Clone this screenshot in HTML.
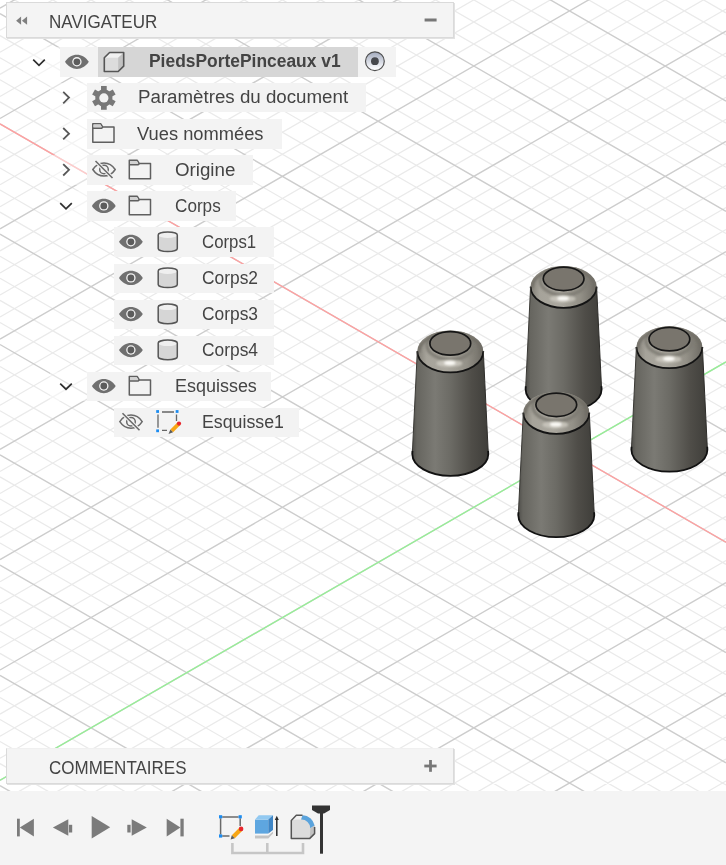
<!DOCTYPE html>
<html><head><meta charset="utf-8">
<style>
html,body{margin:0;padding:0;}
body{width:726px;height:865px;position:relative;overflow:hidden;background:#fff;font-family:"Liberation Sans",sans-serif;}
#vp{position:absolute;left:0;top:0;}
.t{position:absolute;white-space:nowrap;color:#444;line-height:1;transform-origin:0 0;}
.box{position:absolute;background:#f3f3f3;}
.ic{position:absolute;overflow:visible;}
.panel{position:absolute;background:#f4f4f4;box-sizing:border-box;border:1px solid #dadada;box-shadow:1px 1px 0 #e2e2e2;}
#tl{position:absolute;left:0;top:791px;width:726px;height:74px;background:#f4f4f4;}
</style></head><body>
<svg id="vp" width="726" height="865" viewBox="0 0 726 865">
<defs>
<linearGradient id="body" x1="0" x2="1" y1="0" y2="0">
<stop offset="0" stop-color="#4f4e4a"/>
<stop offset="0.06" stop-color="#66655f"/>
<stop offset="0.3" stop-color="#7b7a74"/>
<stop offset="0.5" stop-color="#6c6b65"/>
<stop offset="0.78" stop-color="#4f4d48"/>
<stop offset="1" stop-color="#3f3e3a"/>
</linearGradient>
<linearGradient id="dome" x1="0" x2="1" y1="0" y2="0">
<stop offset="0" stop-color="#817e76"/>
<stop offset="0.14" stop-color="#a6a39a"/>
<stop offset="0.45" stop-color="#aba89f"/>
<stop offset="0.75" stop-color="#949188"/>
<stop offset="1" stop-color="#6d6a63"/>
</linearGradient>
<filter id="blur" x="-50%" y="-50%" width="200%" height="200%"><feGaussianBlur stdDeviation="1.6"/></filter>
<filter id="gb" x="0" y="0" width="726" height="865" filterUnits="userSpaceOnUse"><feGaussianBlur stdDeviation="0.45"/></filter>
<filter id="blur2" x="-50%" y="-100%" width="200%" height="300%"><feGaussianBlur stdDeviation="1.1"/></filter>
<filter id="blur1" x="-20%" y="-50%" width="140%" height="200%"><feGaussianBlur stdDeviation="1"/></filter>
</defs>
<g filter="url(#gb)">
<path d="M0 -405.54 L726 12.84 M0 -383.48 L726 34.9 M0 -361.42 L726 56.96 M0 -339.36 L726 79.02 M0 -295.24 L726 123.14 M0 -273.18 L726 145.2 M0 -251.12 L726 167.26 M0 -229.06 L726 189.32 M0 -184.94 L726 233.44 M0 -162.88 L726 255.5 M0 -140.82 L726 277.56 M0 -118.76 L726 299.62 M0 -74.64 L726 343.74 M0 -52.58 L726 365.8 M0 -30.52 L726 387.86 M0 -8.46 L726 409.92 M0 35.66 L726 454.04 M0 57.72 L726 476.1 M0 79.78 L726 498.16 M0 101.84 L726 520.22 M0 145.96 L726 564.34 M0 168.02 L726 586.4 M0 190.08 L726 608.46 M0 212.14 L726 630.52 M0 256.26 L726 674.64 M0 278.32 L726 696.7 M0 300.38 L726 718.76 M0 322.44 L726 740.82 M0 366.56 L726 784.94 M0 388.62 L726 807 M0 410.68 L726 829.06 M0 432.74 L726 851.12 M0 476.86 L726 895.24 M0 498.92 L726 917.3 M0 520.98 L726 939.36 M0 543.04 L726 961.42 M0 587.16 L726 1005.54 M0 609.22 L726 1027.6 M0 631.28 L726 1049.66 M0 653.34 L726 1071.72 M0 697.46 L726 1115.84 M0 719.52 L726 1137.9 M0 741.58 L726 1159.96 M0 763.64 L726 1182.02 M0 807.76 L726 1226.14 M0 829.82 L726 1248.2 M0 851.88 L726 1270.26 M0 30.26 L726 -388.12 M0 52.32 L726 -366.06 M0 74.38 L726 -344 M0 96.44 L726 -321.94 M0 140.56 L726 -277.82 M0 162.62 L726 -255.76 M0 184.68 L726 -233.7 M0 206.74 L726 -211.64 M0 250.86 L726 -167.52 M0 272.92 L726 -145.46 M0 294.98 L726 -123.4 M0 317.04 L726 -101.34 M0 361.16 L726 -57.22 M0 383.22 L726 -35.16 M0 405.28 L726 -13.1 M0 427.34 L726 8.96 M0 471.46 L726 53.08 M0 493.52 L726 75.14 M0 515.58 L726 97.2 M0 537.64 L726 119.26 M0 581.76 L726 163.38 M0 603.82 L726 185.44 M0 625.88 L726 207.5 M0 647.94 L726 229.56 M0 692.06 L726 273.68 M0 714.12 L726 295.74 M0 736.18 L726 317.8 M0 758.24 L726 339.86 M0 802.36 L726 383.98 M0 824.42 L726 406.04 M0 846.48 L726 428.1 M0 868.54 L726 450.16 M0 912.66 L726 494.28 M0 934.72 L726 516.34 M0 956.78 L726 538.4 M0 978.84 L726 560.46 M0 1022.96 L726 604.58 M0 1045.02 L726 626.64 M0 1067.08 L726 648.7 M0 1089.14 L726 670.76 M0 1133.26 L726 714.88 M0 1155.32 L726 736.94 M0 1177.38 L726 759 M0 1199.44 L726 781.06 M0 1243.56 L726 825.18 M0 1265.62 L726 847.24" stroke="#eaeaea" stroke-width="1.25" fill="none"/>
<path d="M0 -317.3 L726 101.08 M0 -207 L726 211.38 M0 -96.7 L726 321.68 M0 13.6 L726 431.98 M0 123.9 L726 542.28 M0 234.2 L726 652.58 M0 344.5 L726 762.88 M0 454.8 L726 873.18 M0 565.1 L726 983.48 M0 675.4 L726 1093.78 M0 785.7 L726 1204.08 M0 8.2 L726 -410.18 M0 118.5 L726 -299.88 M0 228.8 L726 -189.58 M0 339.1 L726 -79.28 M0 449.4 L726 31.02 M0 559.7 L726 141.32 M0 670 L726 251.62 M0 780.3 L726 361.92 M0 890.6 L726 472.22 M0 1000.9 L726 582.52 M0 1111.2 L726 692.82 M0 1221.5 L726 803.12" stroke="#cdcdcd" stroke-width="1.4" fill="none"/>
</g>
<path d="M0 123.9 L726 542.28" stroke="#ffa0a0" stroke-width="1.3" fill="none"/>
<path d="M0 780.3 L726 361.92" stroke="#96ef96" stroke-width="1.3" fill="none"/>
<path d="M530.6 286.7 L525.6 389.3 A38 21.9 0 0 0 601.6 389.3 L596.6 286.7 Z" fill="url(#body)"/>
<clipPath id="dc0"><path d="M530.6 286.7 A33 20.8 0 0 1 596.6 286.7 A33 21.1 0 0 1 530.6 286.7 Z"/></clipPath>
<path d="M530.6 286.7 A33 20.8 0 0 1 596.6 286.7 A33 21.1 0 0 1 530.6 286.7 Z" fill="url(#dome)"/>
<g clip-path="url(#dc0)">
<ellipse cx="563.6" cy="280.3" rx="23.4" ry="14.76" fill="none" stroke="#7e7b73" stroke-width="3.5" opacity="0.9" filter="url(#blur1)"/>
<path d="M532.1 287.7 A31.5 19.3 0 0 1 595.1 287.7" fill="none" stroke="#716e66" stroke-width="3" opacity="0.9" filter="url(#blur1)"/>
<ellipse cx="562.6" cy="298.8" rx="13" ry="3.6" fill="#cdcac1" opacity="0.8" filter="url(#blur2)"/>
<ellipse cx="563.1" cy="298.4" rx="6" ry="2.2" fill="#fbfaf6" filter="url(#blur2)"/>
</g>
<ellipse cx="563.6" cy="278.8" rx="20.4" ry="11.76" fill="#79756d" stroke="#161616" stroke-width="1.7"/>
<path d="M530.6 286.7 A33 21.1 0 0 0 596.6 286.7" fill="none" stroke="#141414" stroke-width="1.8"/>
<path d="M530.6 286.7 L525.6 389.3" fill="none" stroke="#3a3935" stroke-width="1"/>
<path d="M596.6 286.7 L601.6 389.3" fill="none" stroke="#2e2d2a" stroke-width="1"/>
<path d="M525.75 386.3 L525.6 389.3 A38 21.9 0 0 0 601.6 389.3 L601.45 386.3" fill="none" stroke="#111" stroke-width="1.8"/>
<path d="M417.3 351.3 L412.3 453.9 A38 21.9 0 0 0 488.3 453.9 L483.3 351.3 Z" fill="url(#body)"/>
<clipPath id="dc1"><path d="M417.3 351.3 A33 20.8 0 0 1 483.3 351.3 A33 21.1 0 0 1 417.3 351.3 Z"/></clipPath>
<path d="M417.3 351.3 A33 20.8 0 0 1 483.3 351.3 A33 21.1 0 0 1 417.3 351.3 Z" fill="url(#dome)"/>
<g clip-path="url(#dc1)">
<ellipse cx="450.3" cy="344.9" rx="23.4" ry="14.76" fill="none" stroke="#7e7b73" stroke-width="3.5" opacity="0.9" filter="url(#blur1)"/>
<path d="M418.8 352.3 A31.5 19.3 0 0 1 481.8 352.3" fill="none" stroke="#716e66" stroke-width="3" opacity="0.9" filter="url(#blur1)"/>
<ellipse cx="449.3" cy="363.4" rx="13" ry="3.6" fill="#cdcac1" opacity="0.8" filter="url(#blur2)"/>
<ellipse cx="449.8" cy="363" rx="6" ry="2.2" fill="#fbfaf6" filter="url(#blur2)"/>
</g>
<ellipse cx="450.3" cy="343.4" rx="20.4" ry="11.76" fill="#79756d" stroke="#161616" stroke-width="1.7"/>
<path d="M417.3 351.3 A33 21.1 0 0 0 483.3 351.3" fill="none" stroke="#141414" stroke-width="1.8"/>
<path d="M417.3 351.3 L412.3 453.9" fill="none" stroke="#3a3935" stroke-width="1"/>
<path d="M483.3 351.3 L488.3 453.9" fill="none" stroke="#2e2d2a" stroke-width="1"/>
<path d="M412.45 450.9 L412.3 453.9 A38 21.9 0 0 0 488.3 453.9 L488.15 450.9" fill="none" stroke="#111" stroke-width="1.8"/>
<path d="M636.4 347.1 L631.4 449.7 A38 21.9 0 0 0 707.4 449.7 L702.4 347.1 Z" fill="url(#body)"/>
<clipPath id="dc2"><path d="M636.4 347.1 A33 20.8 0 0 1 702.4 347.1 A33 21.1 0 0 1 636.4 347.1 Z"/></clipPath>
<path d="M636.4 347.1 A33 20.8 0 0 1 702.4 347.1 A33 21.1 0 0 1 636.4 347.1 Z" fill="url(#dome)"/>
<g clip-path="url(#dc2)">
<ellipse cx="669.4" cy="340.7" rx="23.4" ry="14.76" fill="none" stroke="#7e7b73" stroke-width="3.5" opacity="0.9" filter="url(#blur1)"/>
<path d="M637.9 348.1 A31.5 19.3 0 0 1 700.9 348.1" fill="none" stroke="#716e66" stroke-width="3" opacity="0.9" filter="url(#blur1)"/>
<ellipse cx="668.4" cy="359.2" rx="13" ry="3.6" fill="#cdcac1" opacity="0.8" filter="url(#blur2)"/>
<ellipse cx="668.9" cy="358.8" rx="6" ry="2.2" fill="#fbfaf6" filter="url(#blur2)"/>
</g>
<ellipse cx="669.4" cy="339.2" rx="20.4" ry="11.76" fill="#79756d" stroke="#161616" stroke-width="1.7"/>
<path d="M636.4 347.1 A33 21.1 0 0 0 702.4 347.1" fill="none" stroke="#141414" stroke-width="1.8"/>
<path d="M636.4 347.1 L631.4 449.7" fill="none" stroke="#3a3935" stroke-width="1"/>
<path d="M702.4 347.1 L707.4 449.7" fill="none" stroke="#2e2d2a" stroke-width="1"/>
<path d="M631.55 446.7 L631.4 449.7 A38 21.9 0 0 0 707.4 449.7 L707.25 446.7" fill="none" stroke="#111" stroke-width="1.8"/>
<path d="M523.3 412.7 L518.3 515.3 A38 21.9 0 0 0 594.3 515.3 L589.3 412.7 Z" fill="url(#body)"/>
<clipPath id="dc3"><path d="M523.3 412.7 A33 20.8 0 0 1 589.3 412.7 A33 21.1 0 0 1 523.3 412.7 Z"/></clipPath>
<path d="M523.3 412.7 A33 20.8 0 0 1 589.3 412.7 A33 21.1 0 0 1 523.3 412.7 Z" fill="url(#dome)"/>
<g clip-path="url(#dc3)">
<ellipse cx="556.3" cy="406.3" rx="23.4" ry="14.76" fill="none" stroke="#7e7b73" stroke-width="3.5" opacity="0.9" filter="url(#blur1)"/>
<path d="M524.8 413.7 A31.5 19.3 0 0 1 587.8 413.7" fill="none" stroke="#716e66" stroke-width="3" opacity="0.9" filter="url(#blur1)"/>
<ellipse cx="555.3" cy="424.8" rx="13" ry="3.6" fill="#cdcac1" opacity="0.8" filter="url(#blur2)"/>
<ellipse cx="555.8" cy="424.4" rx="6" ry="2.2" fill="#fbfaf6" filter="url(#blur2)"/>
</g>
<ellipse cx="556.3" cy="404.8" rx="20.4" ry="11.76" fill="#79756d" stroke="#161616" stroke-width="1.7"/>
<path d="M523.3 412.7 A33 21.1 0 0 0 589.3 412.7" fill="none" stroke="#141414" stroke-width="1.8"/>
<path d="M523.3 412.7 L518.3 515.3" fill="none" stroke="#3a3935" stroke-width="1"/>
<path d="M589.3 412.7 L594.3 515.3" fill="none" stroke="#2e2d2a" stroke-width="1"/>
<path d="M518.45 512.3 L518.3 515.3 A38 21.9 0 0 0 594.3 515.3 L594.15 512.3" fill="none" stroke="#111" stroke-width="1.8"/>
</svg>

<!-- navigator header -->
<div class="panel" style="left:6px;top:2px;width:448px;height:36px;"></div>
<svg class="ic" style="left:0;top:0" width="460" height="40">
<path d="M16.1 20.65 L21.1 16.5 V24.8 Z M21.9 20.65 L27.1 16.5 V24.8 Z" fill="#808080"/>
<rect x="424.6" y="18.5" width="12" height="3" fill="#777"/>
</svg>

<!-- tree rows -->
<div class="box" style="left:23px;top:47px;width:37px;height:30px;background:rgba(255,255,255,0.45);"></div>
<div class="box" style="left:50px;top:83.1px;width:37px;height:29.4px;background:rgba(255,255,255,0.45);"></div>
<div class="box" style="left:50px;top:119.2px;width:37px;height:29.4px;background:rgba(255,255,255,0.45);"></div>
<div class="box" style="left:50px;top:155.3px;width:37px;height:29.4px;background:rgba(255,255,255,0.45);"></div>
<div class="box" style="left:50px;top:191.3px;width:37px;height:29.4px;background:rgba(255,255,255,0.45);"></div>
<div class="box" style="left:50px;top:371.7px;width:37px;height:29.4px;background:rgba(255,255,255,0.45);"></div>
<div class="box" style="left:60px;top:47px;width:38px;height:30px;"></div>
<div class="box" style="left:98px;top:47px;width:260px;height:30px;background:#d6d6d6;"></div>
<div class="box" style="left:358px;top:47px;width:38px;height:30px;"></div>

<div class="box" style="left:87px;top:83.1px;width:279px;height:29.4px;"></div>
<div class="box" style="left:87px;top:119.2px;width:194.5px;height:29.4px;"></div>
<div class="box" style="left:87px;top:155.3px;width:166px;height:29.4px;"></div>
<div class="box" style="left:87px;top:191.3px;width:148.5px;height:29.4px;"></div>
<div class="box" style="left:114px;top:227.4px;width:160px;height:29.4px;"></div>
<div class="box" style="left:114px;top:263.5px;width:160px;height:29.4px;"></div>
<div class="box" style="left:114px;top:299.6px;width:160px;height:29.4px;"></div>
<div class="box" style="left:114px;top:335.6px;width:160px;height:29.4px;"></div>
<div class="box" style="left:87px;top:371.7px;width:184px;height:29.4px;"></div>
<div class="box" style="left:114px;top:407.8px;width:185px;height:29.4px;"></div>

<svg class="ic" style="left:0;top:0" width="460" height="450">
<defs>
<g id="eye"><path d="M-11.9 0 C-6 -9.5 6 -9.5 11.9 0 C6 9.5 -6 9.5 -11.9 0 Z" fill="#707070"/><circle r="4.7" fill="#f4f4f4"/><circle r="3.4" fill="#5c5c5c"/></g>
<g id="eyeh" fill="none" stroke="#6a6a6a" stroke-width="1.5"><path d="M-11.2 0 C-5.5 -8.8 5.5 -8.8 11.2 0 C5.5 8.8 -5.5 8.8 -11.2 0 Z"/><circle r="4.3"/><path d="M-8.5 -8.5 L8.5 8.5" stroke="#f3f3f3" stroke-width="3.6"/><path d="M-8.5 -8.5 L8.5 8.5" stroke-width="1.6"/></g>
<g id="folder"><path d="M4.8 23.2 V4.8 H12.8 L14.8 8.1 H26 V23.2 Z" fill="#f3f3f3" stroke="#5f5f5f" stroke-width="1.5" stroke-linejoin="round"/><path d="M5.5 5.6 H12.4 L13.9 8.5 L13.2 8.6 H5.5Z" fill="#d2d2d2"/><path d="M4.8 9.3 H13.6 L14.8 8.1" fill="none" stroke="#5f5f5f" stroke-width="1.5"/></g>
<g id="cylico"><path d="M44.2 6.9 V20.5 A9.55 3 0 0 0 63.3 20.5 V6.9 Z" fill="#d6d6d6"/><ellipse cx="53.75" cy="6.9" rx="9.55" ry="3" fill="#efefef"/><path d="M44.2 6.9 A9.55 3 0 0 1 63.3 6.9 V20.5 A9.55 3 0 0 1 44.2 20.5 Z" fill="none" stroke="#555" stroke-width="1.5"/></g>
<g id="chevr"><path d="M-3.2 -5.7 L2.6 0 L-3.2 5.7" fill="none" stroke="#585858" stroke-width="1.8"/></g>
<g id="chevd"><path d="M-5.8 -2.8 L0 2.8 L5.8 -2.8" fill="none" stroke="#2e2e2e" stroke-width="1.7"/></g>
</defs>
<!-- row0 -->
<use href="#chevd" x="39" y="62.5"/>
<use href="#eye" x="76.9" y="61.8"/>
<path d="M104.3 57.8 L109.6 52.5 H123.7 V66.2 L118.2 71.5 H104.3 Z" fill="#dcdcdc"/>
<path d="M104.3 57.8 L109.6 52.5 H123.7 L118.2 57.8 Z" fill="#f1f1f1"/>
<path d="M118.2 57.8 L123.7 52.5 V66.2 L118.2 71.5 Z" fill="#c2c2c2"/>
<path d="M104.3 57.8 L109.6 52.5 H123.7 V66.2 L118.2 71.5 H104.3 Z" fill="none" stroke="#555" stroke-width="1.6" stroke-linejoin="round"/>
<defs><linearGradient id="rad" x1="0" x2="0" y1="0" y2="1"><stop offset="0" stop-color="#a2aabd"/><stop offset="0.85" stop-color="#f6f7fa"/><stop offset="1" stop-color="#ffffff"/></linearGradient></defs>
<circle cx="374.9" cy="61.2" r="9.4" fill="url(#rad)" stroke="#505050" stroke-width="1.2"/>
<circle cx="374.9" cy="61.2" r="3.9" fill="#46484d"/>
<!-- row1 params -->
<use href="#chevr" x="66.4" y="97.6"/>
<g transform="translate(103.87 97.88)" fill="#787878">
<g id="tooth"><rect x="-2.85" y="-11.9" width="5.7" height="5"/></g>
<use href="#tooth" transform="rotate(60)"/><use href="#tooth" transform="rotate(120)"/><use href="#tooth" transform="rotate(180)"/><use href="#tooth" transform="rotate(240)"/><use href="#tooth" transform="rotate(300)"/>
<circle r="8.6"/><circle r="4.6" fill="#f3f3f3"/>
</g>
<!-- row2 vues -->
<use href="#chevr" x="66.4" y="133.7"/>
<use href="#folder" x="88" y="119"/>
<!-- row3 origine -->
<use href="#chevr" x="66.4" y="169.8"/>
<use href="#eyeh" x="104" y="169.5"/>
<use href="#folder" x="124.5" y="155.5"/>
<!-- row4 corps -->
<use href="#chevd" x="66" y="206"/>
<use href="#eye" x="103.8" y="205.9"/>
<use href="#folder" x="124.5" y="191.5"/>
<!-- corps 1-4 -->
<use href="#eye" x="130.9" y="241.8"/>
<use href="#cylico" x="114" y="228"/>
<use href="#eye" x="130.9" y="277.9"/>
<use href="#cylico" x="114" y="264.1"/>
<use href="#eye" x="130.9" y="314"/>
<use href="#cylico" x="114" y="300.2"/>
<use href="#eye" x="130.9" y="350"/>
<use href="#cylico" x="114" y="336.2"/>
<!-- esquisses -->
<use href="#chevd" x="66" y="386.4"/>
<use href="#eye" x="103.8" y="386"/>
<use href="#folder" x="124.5" y="371.8"/>
<!-- esquisse1 -->
<use href="#eyeh" x="131" y="421.7"/>
<g transform="translate(114 408)">
<path d="M48 4 H60 M44 6.6 V19.8 M62.5 6.6 V13 M48 22.4 H53" stroke="#666" stroke-width="1.3" fill="none"/>
<rect x="42.2" y="2.1" width="2.8" height="2.8" fill="#1c8cf0"/>
<rect x="61.7" y="2.1" width="2.8" height="2.8" fill="#1c8cf0"/>
<rect x="42.2" y="21.4" width="2.8" height="2.8" fill="#1c8cf0"/>
<path d="M56.4 21.5 L63.6 14.3 L66.3 17 L59.1 24.2 Z" fill="#f7a614"/>
<circle cx="65" cy="15.6" r="2.1" fill="#e8262c"/>
<path d="M56.4 21.5 L59.1 24.2 L54.5 26 Z" fill="#5c5c5c"/>
</g>
</svg>


<!-- comments -->
<div class="panel" style="left:6px;top:748px;width:448px;height:36px;border-top-color:#f0f0f0;"></div>
<svg class="ic" style="left:0;top:740px" width="460" height="50">
<rect x="424.3" y="24.6" width="12.3" height="2.8" fill="#777"/>
<rect x="429.1" y="20" width="2.8" height="11.8" fill="#777"/>
</svg>

<!-- timeline -->
<div id="tl"></div>
<svg class="ic" style="left:0;top:791px" width="726" height="74">
<g fill="#7b7b7b">
<rect x="17" y="27.7" width="2.8" height="17.7"/><path d="M19.8 36.5 L33.9 27.7 V45.4 Z"/>
<path d="M52.9 36.5 L68.3 28.3 V44.7 Z"/><rect x="68.9" y="33.8" width="3.3" height="7.7"/>
<path d="M91.7 25 L110.2 36.3 L91.7 47.6 Z"/>
<rect x="127.3" y="33.8" width="3.3" height="7.7"/><path d="M146.8 36.5 L131.7 28.3 V44.7 Z"/>
<path d="M180.4 36.5 L166.7 27.7 V45.4 Z"/><rect x="180.4" y="27.7" width="3.3" height="17.7"/>
</g>
<path d="M232.4 52 V62 H303 V52 M267.3 52 V62" fill="none" stroke="#c6c6c6" stroke-width="2.6"/>
<g transform="translate(210 9)">
<path d="M12.2 17 H28.6 M10.6 18.3 V34.4 M30.2 18.3 V26 M12.2 35.9 H19.5" stroke="#6a6a6a" stroke-width="1.5" fill="none"/>
<rect x="9" y="15.2" width="3.2" height="3.2" fill="#1c8cf0"/>
<rect x="28.6" y="15.2" width="3.2" height="3.2" fill="#1c8cf0"/>
<rect x="9" y="34.4" width="3.2" height="3.2" fill="#1c8cf0"/>
<path d="M21.8 35.2 L29.6 27.4 L32.6 30.4 L24.8 38.2 Z" fill="#f7a614"/>
<circle cx="31.1" cy="28.9" r="2.3" fill="#e8262c"/>
<path d="M21.8 35.2 L24.8 38.2 L20.6 39.4 Z" fill="#5c5c5c"/>
</g>
<path d="M255 28.6 H268.3 V42.6 H255 Z" fill="#5ea6e0"/>
<path d="M255 28.6 L258.7 24.3 H273 L268.3 28.6 Z" fill="#92c9f1"/>
<path d="M268.3 28.6 L273 24.3 V39.1 L268.3 42.6 Z" fill="#3f86c6"/>
<path d="M255 43.6 H268.3 L273 39.7 V42.6 L268.3 47.4 H255 Z" fill="#f8f8f8"/><path d="M255 44.4 H268.3 L273 40.5 V42.6 L268.3 47.4 H255 Z" fill="#c4c4c4"/>
<path d="M276.8 45 V28" stroke="#2a2a2a" stroke-width="1.5"/><path d="M274.8 29 L276.8 24.8 L278.8 29Z" fill="#2a2a2a"/>
<path d="M291.3 29.6 L296.3 24.3 H302.5 A12.6 12.6 0 0 1 314.6 34.5 V42.6 L309.8 47.4 H291.3 Z" fill="#dcdcdc"/>
<path d="M291.3 29.6 L296.3 24.3 H302.5 L301.1 28.6 H296 Z" fill="#f2f2f2"/>
<path d="M302.5 24.3 A12.6 12.6 0 0 1 314.6 34.5 L310.3 37.3 A8.8 8.8 0 0 0 301.1 28.6 Z" fill="#5aa3dc"/>
<path d="M310.3 37.3 L314.6 34.5 V42.6 L309.8 47.4 Z" fill="#c2c2c2"/>
<path d="M302.5 24.3 H296.3 L291.3 29.6 V47.4 H309.8 L314.6 42.6 V36" fill="none" stroke="#555" stroke-width="1.5" stroke-linejoin="round"/>
<path d="M312 14.4 H330 V19 L324 22.4 H318 L312 19 Z" fill="#333"/>
<rect x="320" y="20" width="3" height="42.7" fill="#333"/>
</svg>
<span class="t" style="left:49.3px;top:12.66px;font-size:18px;transform:scaleX(0.9474);">NAVIGATEUR</span>
<span class="t" style="left:148.5px;top:52.46px;font-size:18px;transform:scaleX(0.9672);font-weight:bold;">PiedsPortePinceaux v1</span>
<span class="t" style="left:138.3px;top:88.36px;font-size:18px;transform:scaleX(1.0396);">Paramètres du document</span>
<span class="t" style="left:137.3px;top:124.56px;font-size:18px;transform:scaleX(1.0169);">Vues nommées</span>
<span class="t" style="left:174.9px;top:160.56px;font-size:18px;transform:scaleX(1.0397);">Origine</span>
<span class="t" style="left:174.9px;top:196.66px;font-size:18px;transform:scaleX(0.9521);">Corps</span>
<span class="t" style="left:201.8px;top:232.76px;font-size:18px;transform:scaleX(0.9328);">Corps1</span>
<span class="t" style="left:201.8px;top:268.86px;font-size:18px;transform:scaleX(0.9655);">Corps2</span>
<span class="t" style="left:201.8px;top:304.96px;font-size:18px;transform:scaleX(0.9655);">Corps3</span>
<span class="t" style="left:201.8px;top:340.96px;font-size:18px;transform:scaleX(0.9655);">Corps4</span>
<span class="t" style="left:175.2px;top:377.06px;font-size:18px;transform:scaleX(0.9976);">Esquisses</span>
<span class="t" style="left:201.8px;top:413.16px;font-size:18px;transform:scaleX(0.9867);">Esquisse1</span>
<span class="t" style="left:48.8px;top:758.56px;font-size:18px;transform:scaleX(0.9438);">COMMENTAIRES</span>
</body></html>
